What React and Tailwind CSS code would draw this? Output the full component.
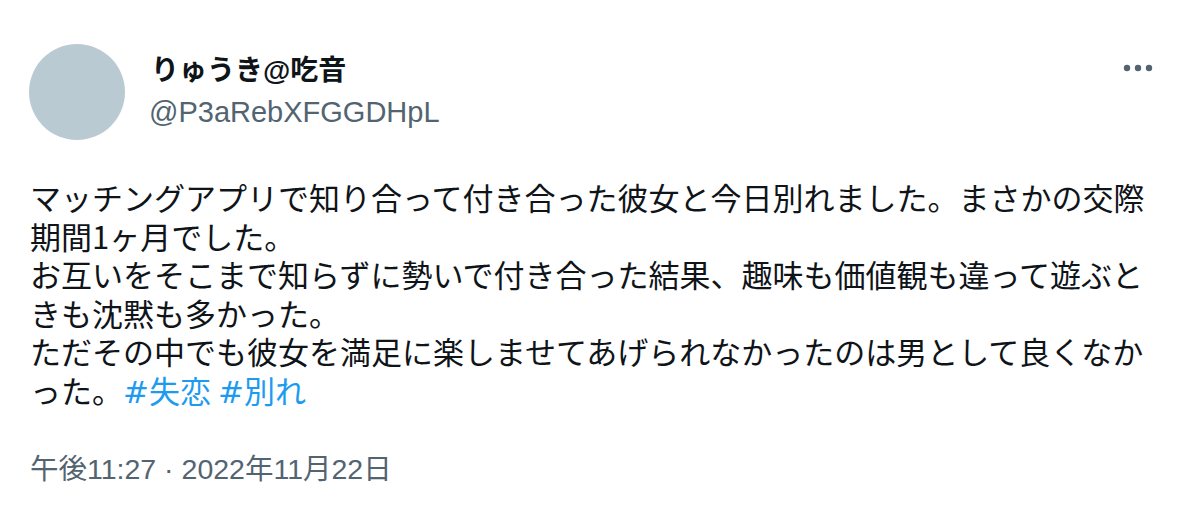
export default function App() {
  return (
    <div className="w-[1182px] h-[512px] bg-white overflow-hidden" lang="ja">
      <div className="flex items-start pl-[29px] pr-[24px] pt-[44px]">
        <div className="w-[96px] h-[96px] rounded-full bg-[#b9cad3] shrink-0" />
        <div className="flex flex-col ml-[24px] mt-[10px] font-['Liberation_Sans','Noto_Sans_CJK_JP',sans-serif]">
          <div className="text-[28px] leading-[34px] font-bold text-[#0f1419] ml-[2px]">
            りゅうき@吃音
          </div>
          <div className="text-[29px] leading-[34px] text-[#536471] mt-[7px]">
            @P3aRebXFGGDHpL
          </div>
        </div>
        <div className="ml-auto mt-[20px] mr-[3px]">
          <svg width="32" height="8" viewBox="0 0 32 8">
            <circle cx="4" cy="4" r="3.2" fill="#536471" />
            <circle cx="15" cy="4" r="3.2" fill="#536471" />
            <circle cx="26" cy="4" r="3.2" fill="#536471" />
          </svg>
        </div>
      </div>
      <div className="px-[30px] mt-[38px] text-[31px] leading-[38.5px] text-[#0f1419] font-['Noto_Sans_CJK_JP','Liberation_Sans',sans-serif]">
        マッチングアプリで知り合って付き合った彼女と今日別れました。まさかの交際<br />
        期間1ヶ月でした。<br />
        お互いをそこまで知らずに勢いで付き合った結果、趣味も価値観も違って遊ぶと<br />
        きも沈黙も多かった。<br />
        ただその中でも彼女を満足に楽しませてあげられなかったのは男として良くなか<br />
        った。<span className="text-[#1d9bf0]"><span className="font-['DejaVu_Sans',sans-serif]">#</span>失恋</span> <span className="text-[#1d9bf0]"><span className="font-['DejaVu_Sans',sans-serif]">#</span>別れ</span>
      </div>
      <div className="px-[30px] mt-[42px] text-[28.5px] leading-[32px] text-[#536471] font-['Liberation_Sans','Noto_Sans_CJK_JP',sans-serif]">
        午後11:27 · 2022年11月22日
      </div>
    </div>
  );
}
